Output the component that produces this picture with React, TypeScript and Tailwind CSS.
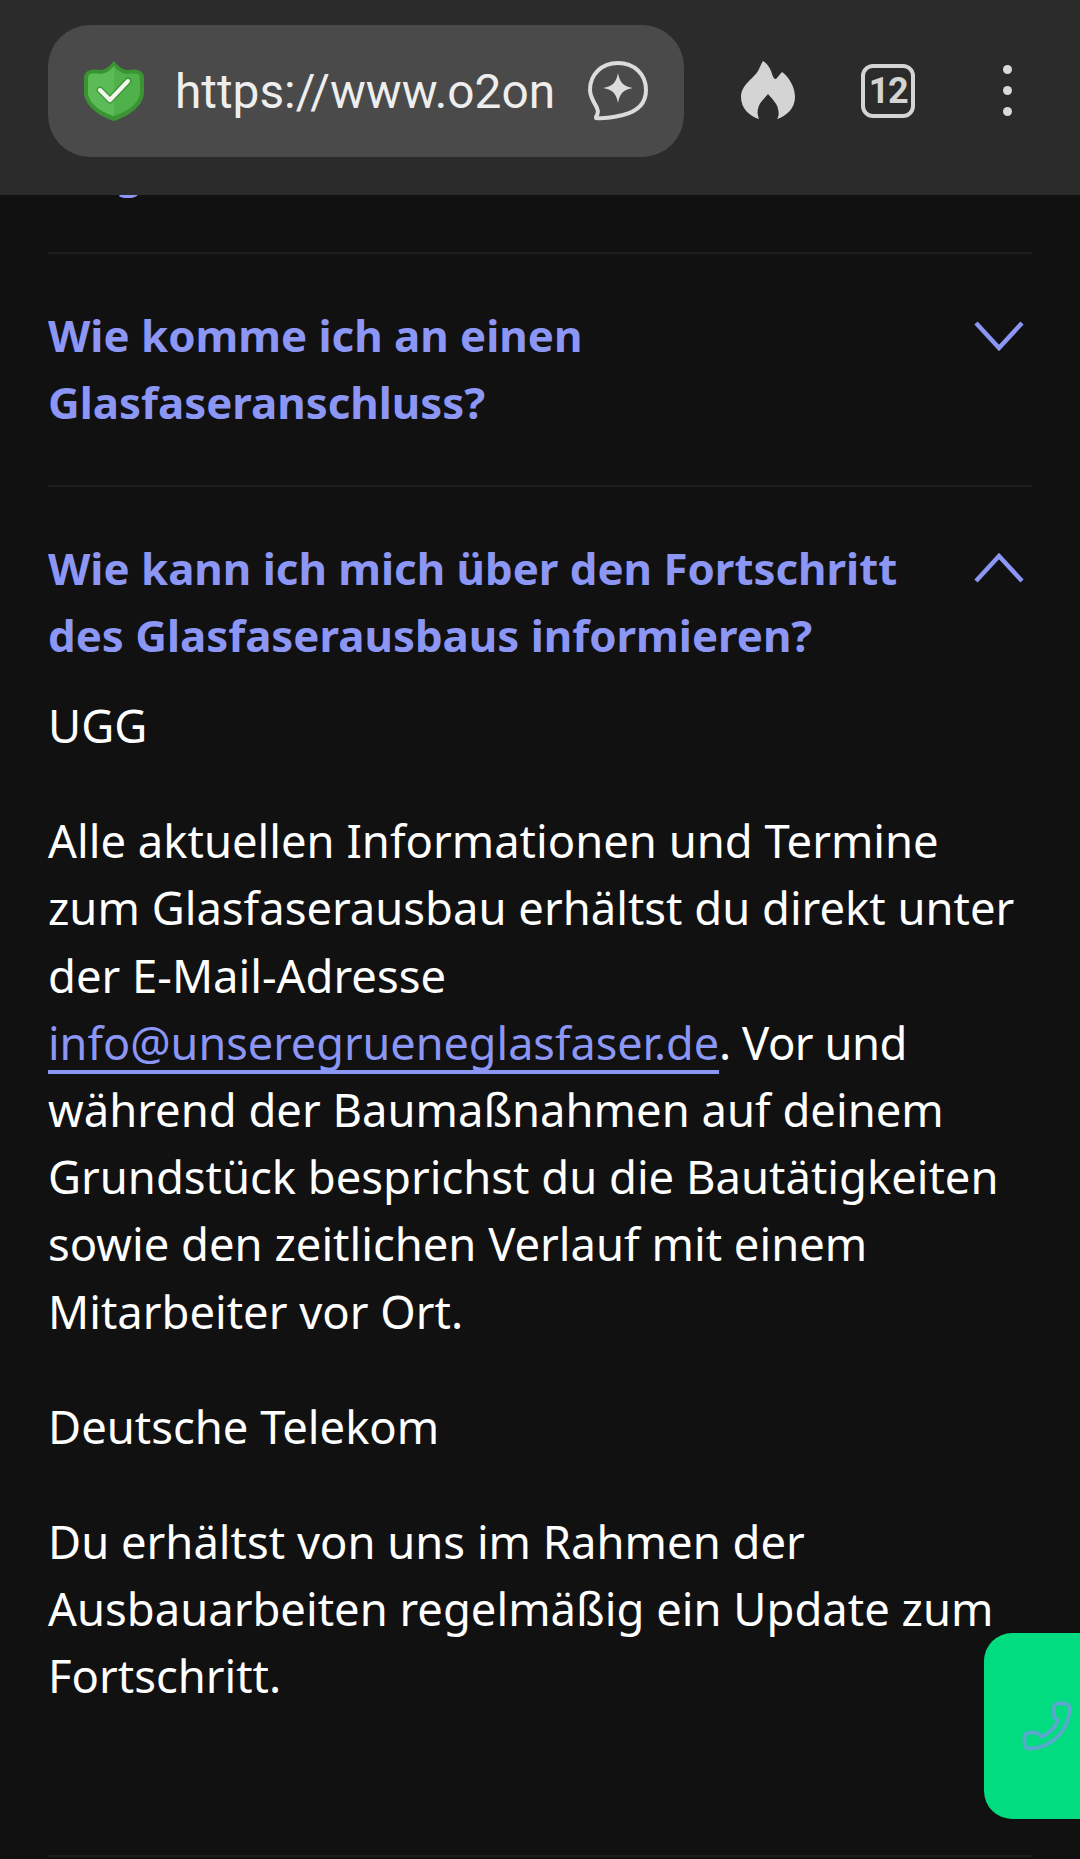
import { Phone } from 'lucide-react';

const bodyFont = "font-['Noto_Sans',sans-serif]";

function ShieldIcon() {
  return (
    <svg width="60" height="60" viewBox="0 0 60 60">
      <path d="M30 0 C33 4 38 9 44 9 C47 9 50 8 53 9 C58 10 60 13 60 17 L60 31 C60 44 46 55 30 60 C14 55 0 44 0 31 L0 17 C0 13 2 10 7 9 C10 8 13 9 16 9 C22 9 27 4 30 0Z" fill="#3a9433" />
      <path d="M30 5 C33 9 38 13 44 13 C47 13 50 12 53 13 C55 13 56 15 56 18 L56 31 C56 42 43 51 30 55 C17 51 4 42 4 31 L4 18 C4 15 5 13 7 13 C10 12 13 13 16 13 C22 13 27 9 30 5Z" fill="#50b04a" />
      <path d="M30 5 C27 9 22 13 16 13 C13 13 10 12 7 13 C5 13 4 15 4 18 L4 31 C4 42 17 51 30 55Z" fill="#5bbb56" />
      <path d="M16 29 L26 39 L44 20" fill="none" stroke="#2f7d2b" strokeOpacity="0.5" strokeWidth="7" strokeLinecap="round" strokeLinejoin="round" />
      <path d="M16 29 L26 39 L44 20" fill="none" stroke="#f2f8ee" strokeWidth="4" strokeLinecap="round" strokeLinejoin="round" />
    </svg>
  );
}

function BubbleIcon() {
  return (
    <svg width="60" height="60" viewBox="0 0 60 60">
      <path d="M8 56 C11 51 10 49 8 45 C5 40 2 35 2 29 C2 13 14 2 30 2 C46 2 58 13 58 29 C58 44 47 51 35 54 C26 56 16 58 8 57Z" fill="none" stroke="#dcdcdc" strokeWidth="4" strokeLinejoin="round" />
      <path d="M30 12 C32 22 35 25 45 27 C35 29 32 32 30 42 C28 32 25 29 15 27 C25 25 28 22 30 12Z" fill="#dcdcdc" />
    </svg>
  );
}

function FlameIcon() {
  return (
    <svg width="54" height="58" viewBox="0 0 54 58">
      <path d="M18 58 C8 55 0 47 0 36 C0 24 12 18 17 10 C19 6 20 3 22 0 C26 2 30 8 31 13 C32 16 33 18 35 18 C37 16 39 13 41 11 C48 16 54 26 54 36 C54 47 46 55 36 58 C38 55 38 52 37 48 C36 42 31 38 27 33 C23 38 18 42 17 48 C16 52 17 55 18 58Z" fill="#d4d4d4" />
    </svg>
  );
}

function Chevron({ up }: { up?: boolean }) {
  return (
    <svg width="50" height="32" viewBox="0 0 50 32" className="shrink-0">
      <path d={up ? 'M2 29 L25 4 L48 29' : 'M2 3 L25 28 L48 3'} fill="none" stroke="#8c96f5" strokeWidth="4.5" />
    </svg>
  );
}

function Question({ lines, up }: { lines: string[]; up?: boolean }) {
  return (
    <div className="flex justify-between pr-[8px]">
      <h3 className="text-[43.8px] leading-[67px] font-bold text-[#8c96f5] font-['Noto_Sans',sans-serif]">
        {lines.map((l) => (
          <div key={l}>{l}</div>
        ))}
      </h3>
      <div className={up ? 'pt-[17px]' : 'pt-[18px]'}>
        <Chevron up={up} />
      </div>
    </div>
  );
}

export default function App() {
  return (
    <div className="relative h-[1859px] overflow-hidden bg-[#111112]">
      {/* Browser bar */}
      <div className="absolute inset-x-0 top-0 z-10 flex h-[195px] items-start bg-[#2b2b2b] pl-[48px]">
        <div className="mt-[25px] flex h-[132px] w-[636px] items-center rounded-[42px] bg-[#4a4a4a] pl-[36px]">
          <ShieldIcon />
          <span className="mt-[3px] ml-[31px] w-[413px] overflow-hidden text-[47.8px] whitespace-nowrap text-[#eeeeee] font-['Roboto',sans-serif]">https://www.o2on</span>
          <BubbleIcon />
        </div>
        <div className="mt-[61px] ml-[57px]">
          <FlameIcon />
        </div>
        <div className="mt-[64px] ml-[66px] flex h-[54px] w-[54px] items-center justify-center rounded-[12px] border-[4px] border-[#d4d4d4] text-[36px] font-bold tracking-[-1.5px] text-[#d4d4d4] font-['Roboto',sans-serif]">
          12
        </div>
        <div className="mt-[65px] ml-[88px] flex flex-col gap-[12px]">
          <div className="h-[9px] w-[9px] rounded-full bg-[#d9d9d9]" />
          <div className="h-[9px] w-[9px] rounded-full bg-[#d9d9d9]" />
          <div className="h-[9px] w-[9px] rounded-full bg-[#d9d9d9]" />
        </div>
      </div>

      {/* FAQ list */}
      <div className="px-[48px] pt-[137px]">
        <div className="h-[67px] text-[44px] leading-[67px] font-bold text-[#8c96f5] font-['Noto_Sans',sans-serif]">Wege</div>
        <div className="mt-[48px] border-t-[2px] border-[#1d1d1e] pt-[48px] pb-[49px]">
          <Question lines={['Wie komme ich an einen', 'Glasfaseranschluss?']} />
        </div>
        <div className="border-t-[2px] border-[#1d1d1e] pt-[48px]">
          <Question up lines={['Wie kann ich mich über den Fortschritt', 'des Glasfaserausbaus informieren?']} />
          <div className={`mt-[23px] text-[45.4px] leading-[67.2px] text-white ${bodyFont}`}>
            <p>UGG</p>
            <p className="mt-[48px]">
              Alle aktuellen Informationen und Termine
              <br />
              zum Glasfaserausbau erhältst du direkt unter
              <br />
              der E-Mail-Adresse
              <br />
              <span className="text-[45px] text-[#8c96f5] underline decoration-[4px] underline-offset-[10px] [text-decoration-skip-ink:none]">info@unseregrueneglasfaser.de</span><span className="tracking-[-0.5px]">. Vor und</span>
              <br />
              während der Baumaßnahmen auf deinem
              <br />
              Grundstück besprichst du die Bautätigkeiten
              <br />
              sowie den zeitlichen Verlauf mit einem
              <br />
              Mitarbeiter vor Ort.
            </p>
            <p className="mt-[48px]">Deutsche Telekom</p>
            <p className="mt-[48px]">
              Du erhältst von uns im Rahmen der
              <br />
              Ausbauarbeiten regelmäßig ein Update zum
              <br />
              Fortschritt.
            </p>
          </div>
        </div>
      </div>
      <div className="absolute inset-x-[48px] top-[1855px] border-t-[2px] border-[#1d1d1e]" />

      {/* Call button */}
      <div className="absolute top-[1633px] right-0 flex h-[186px] w-[96px] items-center rounded-l-[28px] bg-[#00dc7f] pl-[36px]">
        <Phone size={54} strokeWidth={1.7} className="-scale-x-100 text-[#5ba8cf]" />
      </div>
    </div>
  );
}
